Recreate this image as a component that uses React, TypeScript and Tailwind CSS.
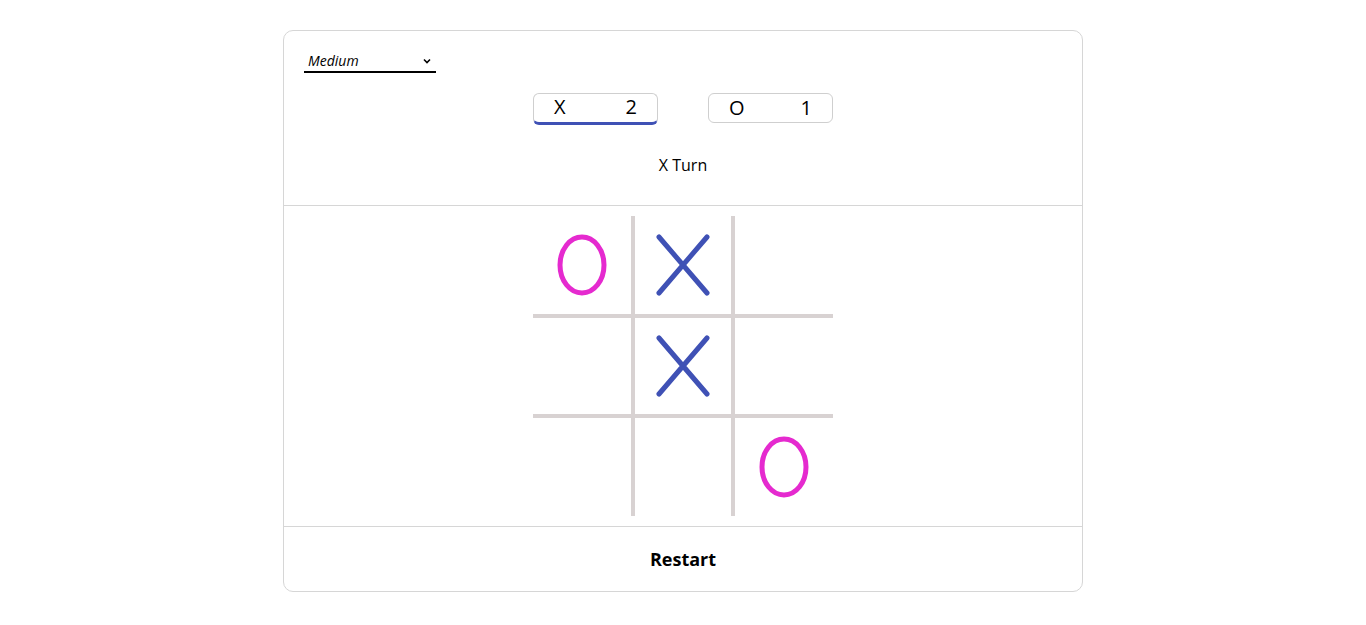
import React, { useState } from 'react';

type Mark = 'X' | 'O' | null;

const XMark = () => (
  <svg width="54" height="62" viewBox="0 0 54 62" fill="none" stroke="#3f51b5" strokeWidth="5" strokeLinecap="round">
    <path d="M3 59L51 3M3 3l48 56" />
  </svg>
);

const OMark = () => (
  <svg width="54" height="66" viewBox="0 0 54 66" fill="none" stroke="#e52acf" strokeWidth="5">
    <ellipse cx="27" cy="33" rx="22" ry="28" />
  </svg>
);

const App = () => {
  const [board] = useState<Mark[]>(['O', 'X', null, null, 'X', null, null, null, 'O']);
  const font = { fontFamily: '"Open Sans", "Liberation Sans", sans-serif' };

  return (
    <div className="min-h-screen bg-white pt-[30px] text-black" style={font}>
      <div className="mx-auto w-[800px] rounded-[10px] border border-[#d6d6d6] bg-white">
        {/* Header */}
        <div className="border-b border-[#d6d6d6] px-5 pt-[20px] pb-[30px]">
          <div className="flex h-[22px] w-[132px] items-center justify-between border-b-2 border-black pl-1 pr-1">
            <span className="text-[14px] italic leading-none">Medium</span>
            <svg width="10" height="8" viewBox="0 0 10 8" fill="none" stroke="black" strokeWidth="1.6">
              <path d="M2 2.5l3 3 3-3" />
            </svg>
          </div>

          <div className="mt-[20px] flex justify-center gap-[50px]">
            <div className="flex h-[32px] w-[125px] items-center justify-between rounded-md border border-[#cfcfcf] border-b-[3px] border-b-[#3f51b5] px-5 pb-[2px] text-[20px] leading-none">
              <span>X</span>
              <span>2</span>
            </div>
            <div className="flex h-[30px] w-[125px] items-center justify-between rounded-md border border-[#cfcfcf] px-5 text-[20px] leading-none">
              <span>O</span>
              <span>1</span>
            </div>
          </div>

          <div className="mt-[30px] text-center text-[16px] leading-5">X Turn</div>
        </div>

        {/* Board */}
        <div className="flex justify-center border-b border-[#d6d6d6] py-[10px]">
          <div className="grid grid-cols-[98px_96px_98px] grid-rows-[98px_96px_98px] gap-[4px] bg-[#d8d2d2]">
            {board.map((cell, i) => (
              <div key={i} className="flex items-center justify-center bg-white">
                {cell === 'X' && <XMark />}
                {cell === 'O' && <OMark />}
              </div>
            ))}
          </div>
        </div>

        {/* Footer */}
        <div className="flex h-[64px] items-center justify-center">
          <button className="text-[18px] font-bold">Restart</button>
        </div>
      </div>
    </div>
  );
};

export default App;
